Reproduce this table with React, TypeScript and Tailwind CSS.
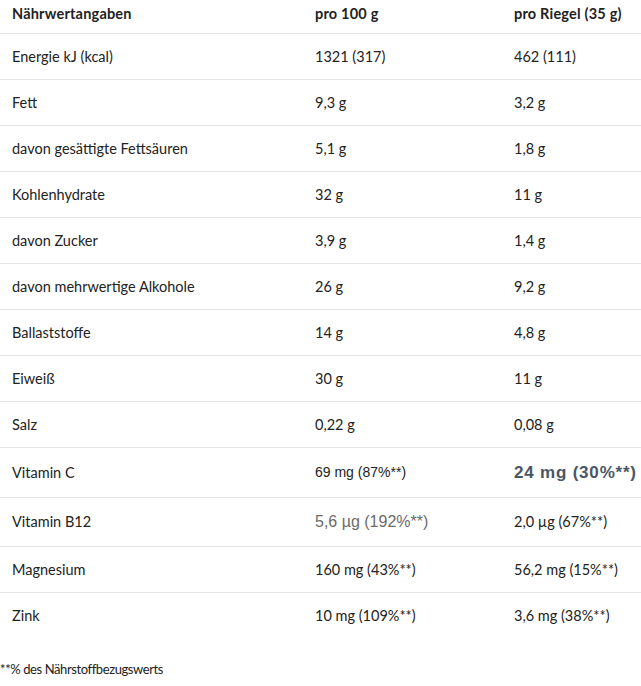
const rows: { label: string; a: React.ReactNode; b: React.ReactNode; h: string }[] = [
  { label: 'Energie kJ (kcal)', a: '1321 (317)', b: '462 (111)', h: 'h-[46px]' },
  { label: 'Fett', a: '9,3 g', b: '3,2 g', h: 'h-[46px]' },
  { label: 'davon gesättigte Fettsäuren', a: '5,1 g', b: '1,8 g', h: 'h-[46px]' },
  { label: 'Kohlenhydrate', a: '32 g', b: '11 g', h: 'h-[46px]' },
  { label: 'davon Zucker', a: '3,9 g', b: '1,4 g', h: 'h-[46px]' },
  { label: 'davon mehrwertige Alkohole', a: '26 g', b: '9,2 g', h: 'h-[46px]' },
  { label: 'Ballaststoffe', a: '14 g', b: '4,8 g', h: 'h-[46px]' },
  { label: 'Eiweiß', a: '30 g', b: '11 g', h: 'h-[46px]' },
  { label: 'Salz', a: '0,22 g', b: '0,08 g', h: 'h-[46px]' },
  {
    label: 'Vitamin C',
    a: <span className="font-['Liberation_Sans',Arial,sans-serif] text-[14px] text-[#222]">69 mg (87%**)</span>,
    b: (
      <span className="font-['Liberation_Sans',Arial,sans-serif] text-[17px] font-bold text-[#4a5565] tracking-[0.8px]">
        24 mg (30%**)
      </span>
    ),
    h: 'h-[50px]',
  },
  {
    label: 'Vitamin B12',
    a: <span className="font-['Liberation_Sans',Arial,sans-serif] text-[16px] text-[#6b6b6b]">5,6 µg (192%**)</span>,
    b: '2,0 µg (67%**)',
    h: 'h-[49px]',
  },
  { label: 'Magnesium', a: '160 mg (43%**)', b: '56,2 mg (15%**)', h: 'h-[46px]' },
  { label: 'Zink', a: '10 mg (109%**)', b: '3,6 mg (38%**)', h: 'h-[46px]' },
]

export default function App() {
  return (
    <div className="w-[641px] h-[686px] bg-white text-[#222] font-['Lato',sans-serif] text-[14.5px]">
      {/* Table */}
      <div className="grid grid-cols-[303px_199px_1fr]">
        <div className="h-[34px] pl-3 pt-[3px] font-bold tracking-[0.2px] border-b border-[#e4e4e4]">Nährwertangaben</div>
        <div className="h-[34px] pl-3 pt-[3px] font-bold tracking-[0.2px] border-b border-[#e4e4e4]">pro 100 g</div>
        <div className="h-[34px] pl-3 pt-[3px] font-bold tracking-[0.2px] border-b border-[#e4e4e4]">pro Riegel (35 g)</div>
        {rows.map((r, i) => {
          const border = i < rows.length - 1 ? 'border-b border-[#e4e4e4]' : ''
          return [
            <div key={r.label + 'l'} className={`${r.h} ${border} pl-3 flex items-center`}>
              {r.label}
            </div>,
            <div key={r.label + 'a'} className={`${r.h} ${border} pl-3 flex items-center`}>
              {r.a}
            </div>,
            <div key={r.label + 'b'} className={`${r.h} ${border} pl-3 flex items-center whitespace-nowrap`}>
              {r.b}
            </div>,
          ]
        })}
      </div>
      {/* Footnote */}
      <p className="mt-[21px] text-[13px] tracking-[-0.4px]">**% des Nährstoffbezugswerts</p>
    </div>
  )
}
